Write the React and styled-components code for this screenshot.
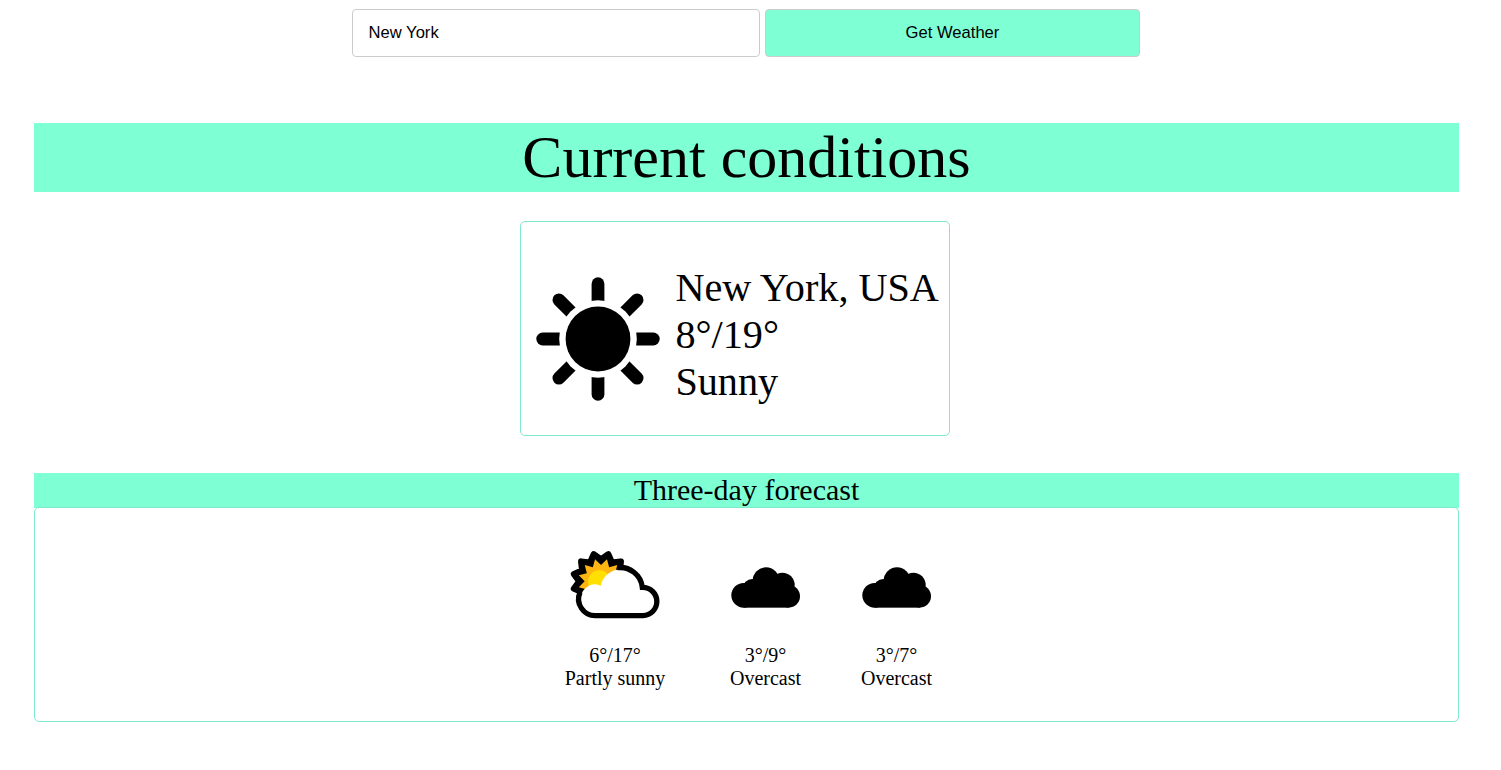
import React from 'react';
import styled, { createGlobalStyle } from 'styled-components';

const GlobalStyle = createGlobalStyle`
  *, *::before, *::after { box-sizing: border-box; }
  body {
    margin: 0;
    background: #fff;
    color: #000;
    font-family: "Liberation Serif", "Times New Roman", serif;
  }
`;

const Page = styled.main`
  display: flex;
  flex-direction: column;
  padding: 9px 42px 48px 34px;
`;

const SearchForm = styled.form`
  display: flex;
  gap: 5px;
  width: 788px;
  height: 48px;
  margin: 0 0 66px 318px;
`;

const controlFont = '16.6px "Liberation Sans", Arial, sans-serif';

const LocationInput = styled.input`
  width: 408px;
  padding: 0 15.6px;
  border: 1px solid #ccc;
  border-radius: 4px;
  background: #fff;
  color: #000;
  font: ${controlFont};
  outline: none;
`;

const SubmitButton = styled.button`
  width: 375px;
  padding: 0;
  border: 1px solid #ccc;
  border-radius: 4px;
  background: aquamarine;
  color: #000;
  font: ${controlFont};
  cursor: pointer;
`;

const Banner = styled.div`
  height: ${(p) => p.$height}px;
  background: aquamarine;
  font-size: ${(p) => p.$size}px;
  line-height: ${(p) => p.$line}px;
  text-align: center;
`;

const CurrentCard = styled.section`
  display: flex;
  width: 430px;
  height: 215px;
  margin: 29px 0 37px 486px;
  padding: 42px 0 0 14.4px;
  border: 1px solid #7fe9d0;
  border-radius: 5px;
`;

const CurrentIcon = styled.div`
  display: flex;
  width: 140px;
  padding-top: 11.7px;
`;

const CurrentText = styled.div`
  font-size: 40.2px;
  line-height: 47px;
  white-space: nowrap;
`;

const ForecastCard = styled.section`
  display: flex;
  height: 215px;
  margin-top: -1px;
  padding: 32px 0 0 520px;
  border: 1px solid #7fe9d0;
  border-radius: 5px;
`;

const Day = styled.div`
  display: flex;
  flex-direction: column;
  align-items: center;
  width: ${(p) => p.$width}px;
  margin-right: ${(p) => p.$gap}px;
  font-size: 20px;
  line-height: 23px;
  white-space: nowrap;
`;

const DayIcon = styled.div`
  display: flex;
  justify-content: center;
  height: 104px;
  padding-top: ${(p) => p.$top}px;

  svg { flex: none; }
`;

const Sun = () => (
  <svg width="126" height="126" viewBox="-63 -63 126 126">
    {[0, 45, 90, 135, 180, 225, 270, 315].map((angle) => (
      <line
        key={angle}
        x1="0"
        y1="-30"
        x2="0"
        y2="-55.3"
        stroke="#000"
        strokeWidth="12.8"
        strokeLinecap="round"
        transform={`rotate(${angle})`}
      />
    ))}
    <circle r="38.8" fill="#fff" />
    <circle r="32.4" />
  </svg>
);

const burst = (outer, inner) =>
  Array.from({ length: 24 }, (_, i) => {
    const a = ((i * 15 + 15) * Math.PI) / 180;
    const r = i % 2 ? inner : outer;
    return `${(138 + r * Math.cos(a)).toFixed(1)},${(124 - r * Math.sin(a)).toFixed(1)}`;
  }).join(' ');

const PartlySunny = () => (
  <svg width="120" height="90" viewBox="0 0 360 270">
    <polygon points={burst(84, 65)} fill="#000" stroke="#000" strokeWidth="19" strokeLinejoin="round" />
    <polygon points={burst(69, 49)} fill="#ffb512" />
    <circle cx="133" cy="125" r="34" fill="#ffe000" />
    <path
      d="M121 220A43.5 43.5 0 0 1 121 133Q130 133 137 138A60 60 0 0 1 256 146H264A37 37 0 0 1 264 220Z"
      fill="#fff"
    />
    <path
      d="M75 157A50 50 0 0 0 121 227H264A42.5 42.5 0 0 0 262 142A67 67 0 0 0 187 83"
      fill="none"
      stroke="#000"
      strokeWidth="16"
    />
  </svg>
);

const Overcast = () => (
  <svg width="70" height="42" viewBox="33 35 210 126">
    <circle cx="71" cy="120" r="37" />
    <circle cx="97" cy="100" r="29" />
    <circle cx="138" cy="76" r="40" />
    <circle cx="187" cy="89" r="37" />
    <circle cx="206" cy="123" r="34" />
    <rect x="71" y="84" width="135" height="73" />
  </svg>
);

const days = [
  { icon: PartlySunny, top: 0, temp: '6°/17°', text: 'Partly sunny', width: 120, gap: 40 },
  { icon: Overcast, top: 27, temp: '3°/9°', text: 'Overcast', width: 101, gap: 30 },
  { icon: Overcast, top: 27, temp: '3°/7°', text: 'Overcast', width: 101, gap: 0 },
];

export default function App() {
  return (
    <>
      <GlobalStyle />
      <Page>
        <SearchForm onSubmit={(e) => e.preventDefault()}>
          <LocationInput type="text" defaultValue="New York" />
          <SubmitButton type="submit">Get Weather</SubmitButton>
        </SearchForm>
        <Banner $height={69} $size={60} $line={69}>Current conditions</Banner>
        <CurrentCard>
          <CurrentIcon><Sun /></CurrentIcon>
          <CurrentText>
            <div>New York, USA</div>
            <div>8°/19°</div>
            <div>Sunny</div>
          </CurrentText>
        </CurrentCard>
        <Banner $height={35} $size={30} $line={33}>Three-day forecast</Banner>
        <ForecastCard>
          {days.map(({ icon: Icon, top, temp, text, width, gap }, i) => (
            <Day key={i} $width={width} $gap={gap}>
              <DayIcon $top={top}><Icon /></DayIcon>
              <div>{temp}</div>
              <div>{text}</div>
            </Day>
          ))}
        </ForecastCard>
      </Page>
    </>
  );
}
